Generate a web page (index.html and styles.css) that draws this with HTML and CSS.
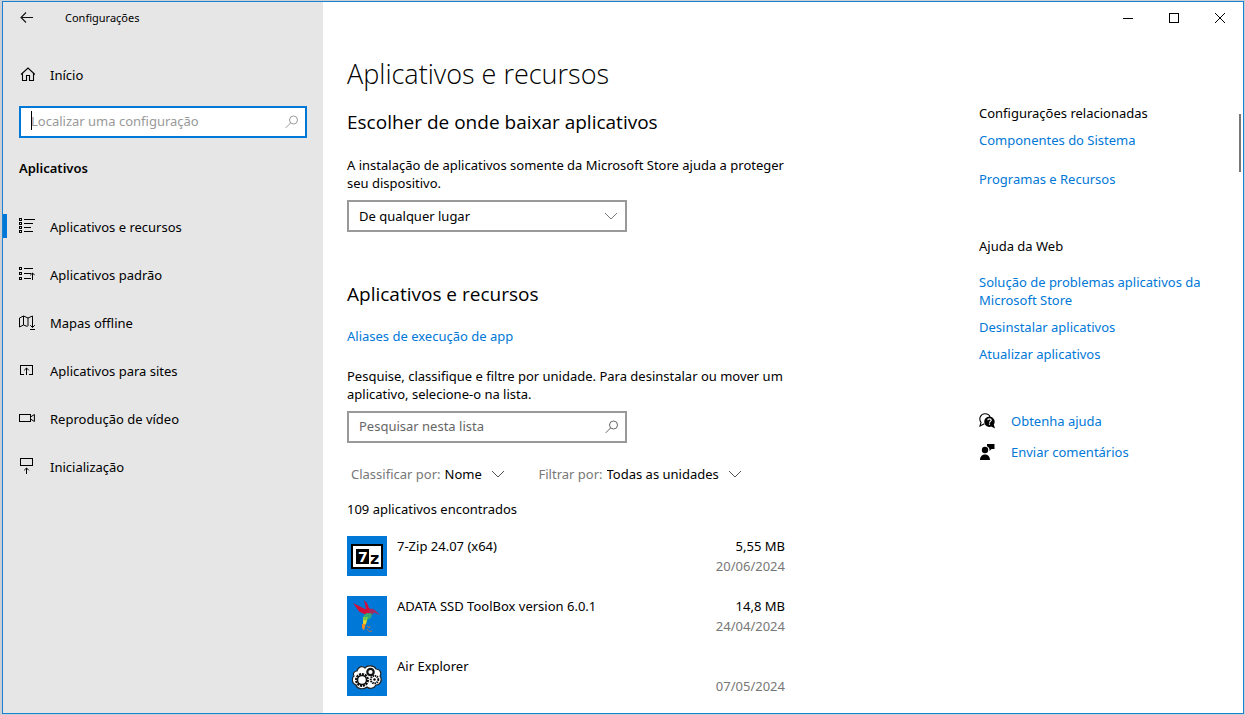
FILE: index.html
```html
<!DOCTYPE html>
<html lang="pt-BR">
<head>
<meta charset="utf-8">
<title>Configurações</title>
<link rel="stylesheet" href="styles.css">
</head>
<body>
<div class="window">
  <aside class="sidebar">
    <header class="sidebar-header">
      <button class="back" type="button" aria-label="Voltar">
        <svg width="14" height="12" viewBox="0 0 14 12" fill="none" stroke="#111" stroke-width="1.1"><path d="M1 5.5H13M6 .5L1 5.5L6 10.5"/></svg>
      </button>
      <span class="window-title">Configurações</span>
    </header>
    <a class="nav-link home" href="#">
      <svg class="icon" width="16" height="16" viewBox="0 0 16 16" fill="none" stroke="#000" stroke-width="1.1"><path d="M2 7.500L9 1L16 7.500M3.500 6.500V13.500H7.500V8.500H10.500V13.500H14.500V6.500"/></svg>
      <span>Início</span>
    </a>
    <div class="search search-settings">
      <input type="text" aria-label="Localizar uma configuração" placeholder="Localizar uma configuração" autofocus>
      <span class="caret"></span>
      <svg class="search-icon" width="14" height="14" viewBox="0 0 14 14" fill="none" stroke="currentColor"><circle cx="8.500" cy="5" r="4"/><path d="M5.700 7.900L.7 12.900"/></svg>
    </div>
    <h2 class="sidebar-heading">Aplicativos</h2>
    <nav class="nav">
      <a class="nav-link current" href="#">
        <svg class="icon" width="16" height="18" viewBox="0 0 16 18" fill="none" stroke="#000" shape-rendering="crispEdges"><path d="M.5 .5h2v2h-2zM.5 4.500h2v2h-2zM.5 8.500h2v2h-2zM.5 12.500h2v2h-2zM5 1.500H16M5 5.500H14M5 9.500H12M5 13.500H14"/></svg>
        <span>Aplicativos e recursos</span>
      </a>
      <a class="nav-link" href="#">
        <svg class="icon" width="16" height="18" viewBox="0 0 16 18" fill="none" stroke="#000"><path shape-rendering="crispEdges" d="M.5 1.500h2v2h-2zM.5 6.500h2v2h-2zM.5 11.500h2v2h-2zM5 2.500H14M5 7.500H12M5 12.500H12M13.500 7V14"/><path d="M11.200 9.300L13.500 7L15.800 9.300"/></svg>
        <span>Aplicativos padrão</span>
      </a>
      <a class="nav-link" href="#">
        <svg class="icon" width="16" height="18" viewBox="0 0 16 18" fill="none" stroke="#000"><path d="M8.500 12.500L4.500 11L.5 13V4L4.500 2L9 4L13.500 2V13.200M4.500 2V11M9 4V12M11.200 11.200L13.500 13.500L15.800 11.200"/><path shape-rendering="crispEdges" d="M11 15.500H16"/></svg>
        <span>Mapas offline</span>
      </a>
      <a class="nav-link" href="#">
        <svg class="icon" width="16" height="18" viewBox="0 0 16 18" fill="none" stroke="#000"><path shape-rendering="crispEdges" d="M5 12.500H1.500V3.500H13.500V12.500H10M7.500 6V13"/><path d="M5.200 8.300L7.500 6L9.800 8.300"/></svg>
        <span>Aplicativos para sites</span>
      </a>
      <a class="nav-link" href="#">
        <svg class="icon" width="16" height="18" viewBox="0 0 16 18" fill="none" stroke="#000"><path shape-rendering="crispEdges" d="M.5 4.500H11.500V11.500H.5z"/><path d="M11.500 7L15.400 4.500V11.500L11.500 9"/></svg>
        <span>Reprodução de vídeo</span>
      </a>
      <a class="nav-link" href="#">
        <svg class="icon" width="16" height="18" viewBox="0 0 16 18" fill="none" stroke="#000"><path shape-rendering="crispEdges" d="M1.500 .5H13.500V7.500H1.500zM7.500 10V16"/><path d="M5.200 12.300L7.500 10L9.800 12.300"/></svg>
        <span>Inicialização</span>
      </a>
    </nav>
  </aside>

  <div class="content">
    <div class="titlebar">
      <button type="button" aria-label="Minimizar"><svg width="10" height="10" viewBox="0 0 10 10" stroke="#000" shape-rendering="crispEdges"><path d="M0 5.500H10"/></svg></button>
      <button type="button" aria-label="Maximizar"><svg width="10" height="10" viewBox="0 0 10 10" fill="none" stroke="#000" shape-rendering="crispEdges"><path d="M.5 .5H9.500V9.500H.5z"/></svg></button>
      <button type="button" aria-label="Fechar"><svg width="10" height="10" viewBox="0 0 10 10" stroke="#000"><path d="M0 0L10 10M10 0L0 10"/></svg></button>
    </div>
    <div class="columns">
      <main class="main">
        <h1>Aplicativos e recursos</h1>
        <section>
          <h2>Escolher de onde baixar aplicativos</h2>
          <label class="text source-text" for="source">A instalação de aplicativos somente da Microsoft Store ajuda a proteger seu dispositivo.</label>
          <div class="field">
            <select id="source"><option>De qualquer lugar</option></select>
            <svg class="chevron" width="14" height="8" viewBox="0 0 14 8" fill="none" stroke="#777"><path d="M1 1L7 7L13 1"/></svg>
          </div>
        </section>
        <section class="apps">
          <h2>Aplicativos e recursos</h2>
          <a class="alias" href="#">Aliases de execução de app</a>
          <p class="text">Pesquise, classifique e filtre por unidade. Para desinstalar ou mover um aplicativo, selecione-o na lista.</p>
          <div class="search search-list">
            <input type="text" aria-label="Pesquisar nesta lista" placeholder="Pesquisar nesta lista">
            <svg class="search-icon" width="14" height="14" viewBox="0 0 14 14" fill="none" stroke="currentColor"><circle cx="8.500" cy="5" r="4"/><path d="M5.700 7.900L.7 12.900"/></svg>
          </div>
          <div class="filters">
            <div class="filter">
              <label for="sort">Classificar por:</label>
              <select id="sort"><option>Nome</option></select>
              <svg width="14" height="8" viewBox="0 0 14 8" fill="none" stroke="#555"><path d="M1 1L7 7L13 1"/></svg>
            </div>
            <div class="filter">
              <label for="drive">Filtrar por:</label>
              <select id="drive"><option>Todas as unidades</option></select>
              <svg width="14" height="8" viewBox="0 0 14 8" fill="none" stroke="#555"><path d="M1 1L7 7L13 1"/></svg>
            </div>
          </div>
          <p class="count">109 aplicativos encontrados</p>
          <ul class="app-list">
            <li class="app">
              <svg class="app-icon" width="40" height="40" viewBox="0 0 40 40"><path fill="#000" d="M4 8H36V33H4z"/><path fill="#fff" d="M6 10H34V31H6z"/><path fill="#000" d="M9 13H22V28H9z"/><text class="zip-seven" x="11" y="26">7</text><text class="zip-z" x="23" y="28">z</text></svg>
              <span class="app-name">7-Zip 24.07 (x64)</span>
              <span class="app-meta"><span>5,55 MB</span><time datetime="2024-06-20">20/06/2024</time></span>
            </li>
            <li class="app">
              <svg class="app-icon" width="40" height="40" viewBox="0 0 40 40"><path fill="#d0103a" d="M6 7L14 11L19 13.500L17 4L20 7L22 12L25 14L24 19L18 18.500L12 15.500z"/><path fill="#a32a62" d="M22 14L25 12.500L28 14L33 19L27 16.500L25 19L22 18z"/><path fill="#35a877" d="M20 17L25 17.500L24 22L20 24L16 23L17 19z"/><path fill="#72c943" d="M16 21L21 21L20 25L16 27z"/><path fill="#e8d52b" d="M16 24L20 24.500L19 28L16 31z"/><path fill="#ef8a29" d="M15 28L18.500 28L18 31L17 34.500L15 32z"/><path fill="none" stroke="#b86d51" d="M20 30L22 32L23 30M20 33L22 35.500L25 35"/></svg>
              <span class="app-name">ADATA SSD ToolBox version 6.0.1</span>
              <span class="app-meta"><span>14,8 MB</span><time datetime="2024-04-24">24/04/2024</time></span>
            </li>
            <li class="app">
              <svg class="app-icon" width="40" height="40" viewBox="0 0 40 40"><path fill="#fff" stroke="#222" stroke-width="1.200" d="M10 15C11 11 15 9 18 12C20 9 27 9 29 13C33 13 35 17 33 20C36 24 33 29 29 29C27 33 22 33 20 31C16 34 10 33 9 29C4 27 5 21 7 20C5 17 8 15 10 15z"/><g fill="#fff" stroke="#111"><circle cx="15" cy="24" r="5.500" stroke-width="3" stroke-dasharray="2 .8"/><circle cx="15" cy="24" r="4.500" stroke-width="1.500"/><circle cx="23.500" cy="16" r="3.200" stroke-width="2.200"/><circle cx="27.500" cy="23.500" r="3.800" stroke-width="2" stroke-dasharray="1.500 .7"/></g><circle cx="27.500" cy="23.500" r="1.200"/></svg>
              <span class="app-name">Air Explorer</span>
              <span class="app-meta"><span></span><time datetime="2024-05-07">07/05/2024</time></span>
            </li>
          </ul>
        </section>
      </main>
      <aside class="related">
        <h3>Configurações relacionadas</h3>
        <ul class="links links-settings">
          <li><a href="#">Componentes do Sistema</a></li>
          <li><a href="#">Programas e Recursos</a></li>
        </ul>
        <h3 class="web-help">Ajuda da Web</h3>
        <ul class="links links-web">
          <li><a href="#">Solução de problemas aplicativos da Microsoft Store</a></li>
          <li><a href="#">Desinstalar aplicativos</a></li>
          <li><a href="#">Atualizar aplicativos</a></li>
        </ul>
        <ul class="links links-support">
          <li><a href="#"><svg width="16" height="16" viewBox="0 0 16 16"><path fill="none" stroke="#000" stroke-width="1.100" d="M5.500 10.700L1 13L2 9.500C-.8 5 2 .7 6 .7C8.500 .7 10.500 2 11 4"/><path d="M10.500 3.500A5.200 5.200 0 0 1 14.800 11.500L16 15.600L12.200 13.600A5.200 5.200 0 1 1 10.500 3.500z"/><path fill="none" stroke="#fff" stroke-width="1.200" d="M8.800 7.200C8.800 5.500 12.200 5.500 12.200 7.200C12.200 8.300 10.500 8.500 10.500 9.700M10.500 10.600V11.800"/></svg>Obtenha ajuda</a></li>
          <li><a href="#"><svg width="16" height="16" viewBox="0 0 16 16"><circle cx="6" cy="6" r="3.200"/><path d="M1 16C1 8.700 11 8.700 11 16zM8 0H15.500V5H12.500L10.500 7V5L9.700 3.400L8 2.200z"/></svg>Enviar comentários</a></li>
        </ul>
      </aside>
    </div>
  </div>
  <div class="scroll-thumb"></div>
</div>
</body>
</html>
```
FILE: styles.css
```css
* { box-sizing: border-box; }

body {
  margin: 0;
  padding: 1px 1px 1px 2px;
  min-height: 100vh;
  display: flex;
  background: #ccd0d4;
  color: #000;
  font: 13px/18px "Noto Sans", "Open Sans", sans-serif;
}

h1, h2, h3, p, ul { margin: 0; padding: 0; font-weight: 400; }
ul { list-style: none; }
a { color: #0078d7; text-decoration: none; }
button, input, select { font: inherit; color: inherit; border-radius: 0; outline: 0; }
svg { flex: none; }

button {
  display: flex;
  align-items: center;
  justify-content: center;
  padding: 0;
  border: 0;
  background: none;
}

select { appearance: none; background: transparent; }

.window {
  position: relative;
  flex: 1;
  display: flex;
  border: 1px solid #1a80d0;
  background: #fff;
}

.sidebar { flex: none; width: 320px; background: #e6e6e6; }
.sidebar-header { display: flex; align-items: center; height: 32px; }
.back { width: 48px; height: 32px; }
.window-title { padding-left: 14px; font-size: 11px; }

.nav-link {
  display: flex;
  align-items: center;
  gap: 15px;
  height: 48px;
  padding-left: 16px;
  color: #000;
}
.home { margin-top: 17px; }
.current { position: relative; }
.current::before {
  content: "";
  position: absolute;
  left: 0;
  top: 11px;
  width: 4px;
  height: 24px;
  background: #0078d7;
}

.search { position: relative; height: 32px; }
.search input {
  width: 100%;
  height: 100%;
  padding: 0 36px 2px 10px;
  border: 2px solid #999;
  background: #fff;
}
.search input::placeholder { color: #666; opacity: 1; }
.search-icon { position: absolute; right: 8px; top: 9px; color: #666; }
.search-settings { margin: 7px 16px 0; }
.search-settings input { border-color: #0078d7; caret-color: transparent; }
.search-settings input::placeholder { color: #999; }
.search-settings .search-icon { color: #999; }
.caret { position: absolute; left: 12px; top: 5px; width: 1px; height: 19px; background: #000; }

.sidebar-heading { margin: 20px 16px 25px; font-size: 13px; line-height: 20px; font-weight: 600; }

.content { flex: 1; min-width: 0; }
.titlebar { display: flex; justify-content: flex-end; height: 32px; }
.titlebar button { width: 46px; height: 32px; }

.columns {
  display: grid;
  grid-template-columns: 1fr 240px;
  padding: 0 24px;
}
.main { max-width: 450px; padding-top: 22px; }
h1 { font-family: "Open Sans", sans-serif; font-size: 27px; line-height: 36px; font-weight: 300; }
.main h2 { font-family: "Open Sans", sans-serif; font-size: 19px; line-height: 28px; }
h1 + section { margin-top: 16px; }
.source-text { display: block; margin-top: 20px; }
.field { position: relative; width: 280px; height: 32px; margin-top: 8px; }
.field select { width: 100%; height: 100%; padding: 0 32px 0 10px; border: 2px solid #999; }
.chevron { position: absolute; right: 9px; top: 12px; pointer-events: none; }

.apps { margin-top: 48px; }
.alias { display: block; margin: 19px 0 22px; }
.search-list { width: 280px; margin-top: 8px; }
.filters { display: flex; gap: 34px; margin-top: 22px; padding-left: 4px; }
.filter { display: flex; align-items: center; color: #777; }
.filter select { margin-left: 4px; padding: 0; border: 0; height: 18px; color: #000; }
.filter svg { margin-left: 8px; }
.count { margin-top: 17px; }

.app-list { display: grid; gap: 20px; width: 438px; margin-top: 18px; }
.app { display: flex; gap: 10px; line-height: 20px; }
.app-icon { background: #0078d7; }
.zip-seven { font: 700 14px "DejaVu Sans", sans-serif; fill: #fff; }
.zip-z { font: 700 16px "DejaVu Sans", sans-serif; fill: #000; }
.app-name { flex: 1; }
.app-meta { display: grid; grid-template-rows: 20px 20px; text-align: right; }
.app-meta time { color: #777; }

.related { padding-top: 70px; }
.related h3 { font-size: 13px; }
.links { display: grid; gap: 9px; margin-top: 9px; }
.links-settings { gap: 21px; }
.related .web-help { margin-top: 49px; }
.links-web { margin-top: 18px; }
.links-support { gap: 13px; margin-top: 49px; }
.links-support a { display: flex; align-items: center; gap: 16px; }

.scroll-thumb {
  position: absolute;
  top: 112px;
  right: 2px;
  width: 2px;
  height: 58px;
  background: #777;
}
```
